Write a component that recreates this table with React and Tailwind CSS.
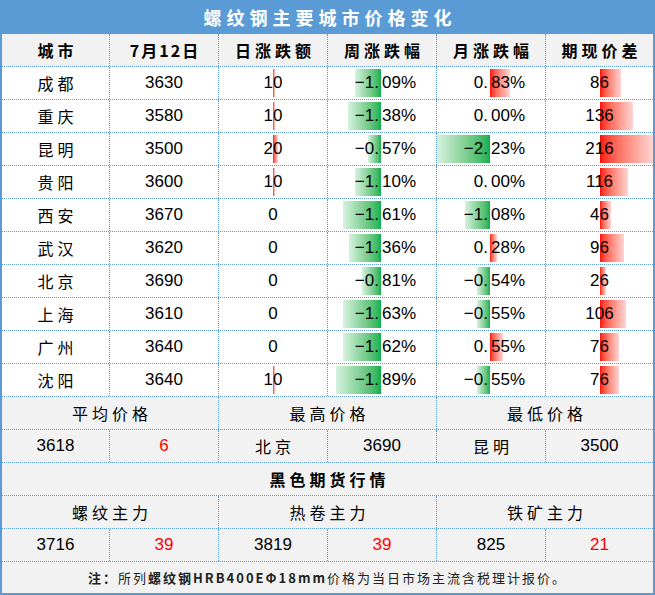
import React from "react";

const ROW =
  "grid h-[33px] grid-cols-[108px_109px_109px_109px_109px_1fr] border-b border-dotted border-[#5b9bd5]";
const CELL =
  "flex h-full items-center justify-center border-r border-dotted border-[#5b9bd5]";
const CELL_LAST = "flex h-full items-center justify-center";
const CJK = "font-['Noto_Sans_CJK_SC',sans-serif] text-[16px] tracking-[4px] pl-[4px] text-black";
const NUM = "font-['Liberation_Sans','Noto_Sans_CJK_SC',sans-serif] text-[17px] text-black";
const NUM_RED = "font-['Liberation_Sans','Noto_Sans_CJK_SC',sans-serif] text-[17px] text-[#ff0000]";

const data = [
  ["成都", 3630, 10, -1.09, 0.83, 86],
  ["重庆", 3580, 10, -1.38, 0.0, 136],
  ["昆明", 3500, 20, -0.57, -2.23, 216],
  ["贵阳", 3600, 10, -1.1, 0.0, 116],
  ["西安", 3670, 0, -1.61, -1.08, 46],
  ["武汉", 3620, 0, -1.36, 0.28, 96],
  ["北京", 3690, 0, -0.81, -0.54, 26],
  ["上海", 3610, 0, -1.63, -0.55, 106],
  ["广州", 3640, 0, -1.62, 0.55, 76],
  ["沈阳", 3640, 10, -1.89, -0.55, 76],
];

function Bar({ v, scale, axis }) {
  if (v === 0) return null;
  const w = Math.abs(v) * scale;
  const neg = v < 0;
  return (
    <div
      className={
        neg
          ? "absolute top-[2px] bottom-[2px] bg-linear-to-r from-[#d6f2e0] to-[#00b050]"
          : "absolute top-[2px] bottom-[2px] bg-linear-to-r from-[#ff0000] to-[#ffd4d4]"
      }
      style={{ left: neg ? axis - w : axis, width: w }}
    />
  );
}

function Pct({ v, last }) {
  const neg = v < 0;
  const [i, f] = Math.abs(v).toFixed(2).split(".");
  return (
    <div className={(last ? CELL_LAST : CELL) + " relative"}>
      <Bar v={v} scale={23.6} axis={53} />
      <div className={"relative flex w-full items-center " + NUM}>
        <span className="w-[53px] pr-[2px] text-right">
          {neg ? "−" : ""}
          {i}.
        </span>
        <span className="pl-[1px]">{f}%</span>
      </div>
    </div>
  );
}

function Plain({ v, last }) {
  return (
    <div className={(last ? CELL_LAST : CELL) + " relative"}>
      <Bar v={v} scale={0.245} axis={54} />
      <span className={"relative " + NUM}>{v}</span>
    </div>
  );
}

export default function App() {
  return (
    <div className="flex h-[595px] w-[655px] flex-col overflow-hidden border-x-2 border-b-2 border-[#5b9bd5] bg-white">
      <div className="flex h-[34px] shrink-0 items-center justify-center bg-[#5b9bd5]">
        <span className="pl-[5px] font-['Noto_Sans_CJK_SC',sans-serif] text-[18px] font-bold tracking-[5px] text-white">
          螺纹钢主要城市价格变化
        </span>
      </div>

      <div className={ROW + " bg-[#f2f2f2]"}>
        {["城市", "7月12日", "日涨跌额", "周涨跌幅", "月涨跌幅", "期现价差"].map((h, k) => (
          <div key={h} className={k === 5 ? CELL_LAST : CELL}>
            <span
              className={
                k === 1
                  ? "pl-[2px] font-['Noto_Sans_CJK_SC',sans-serif] text-[16px] font-bold tracking-[2px] text-black"
                  : "pl-[4px] font-['Noto_Sans_CJK_SC',sans-serif] text-[16px] font-bold tracking-[4px] text-black"
              }
            >
              {h}
            </span>
          </div>
        ))}
      </div>

      {data.map(([city, price, day, week, month, diff]) => (
        <div key={city} className={ROW + " bg-white"}>
          <div className={CELL}>
            <span className={CJK}>{city}</span>
          </div>
          <div className={CELL}>
            <span className={NUM}>{price}</span>
          </div>
          <Plain v={day} />
          <Pct v={week} />
          <Pct v={month} />
          <Plain v={diff} last />
        </div>
      ))}

      <div className={ROW + " bg-[#f2f2f2]"}>
        <div className={CELL + " col-span-2"}>
          <span className={CJK}>平均价格</span>
        </div>
        <div className={CELL + " col-span-2"}>
          <span className={CJK}>最高价格</span>
        </div>
        <div className={CELL_LAST + " col-span-2"}>
          <span className={CJK}>最低价格</span>
        </div>
      </div>

      <div className={ROW + " bg-[#f2f2f2]"}>
        <div className={CELL}>
          <span className={NUM}>3618</span>
        </div>
        <div className={CELL}>
          <span className={NUM_RED}>6</span>
        </div>
        <div className={CELL}>
          <span className={CJK}>北京</span>
        </div>
        <div className={CELL}>
          <span className={NUM}>3690</span>
        </div>
        <div className={CELL}>
          <span className={CJK}>昆明</span>
        </div>
        <div className={CELL_LAST}>
          <span className={NUM}>3500</span>
        </div>
      </div>

      <div className={ROW + " bg-[#f2f2f2]"}>
        <div className={CELL_LAST + " col-span-6"}>
          <span className="pl-[4px] font-['Noto_Sans_CJK_SC',sans-serif] text-[16px] font-bold tracking-[4px] text-black">
            黑色期货行情
          </span>
        </div>
      </div>

      <div className={ROW + " bg-[#f2f2f2]"}>
        <div className={CELL + " col-span-2"}>
          <span className={CJK}>螺纹主力</span>
        </div>
        <div className={CELL + " col-span-2"}>
          <span className={CJK}>热卷主力</span>
        </div>
        <div className={CELL_LAST + " col-span-2"}>
          <span className={CJK}>铁矿主力</span>
        </div>
      </div>

      <div className={ROW + " bg-[#f2f2f2]"}>
        <div className={CELL}>
          <span className={NUM}>3716</span>
        </div>
        <div className={CELL}>
          <span className={NUM_RED}>39</span>
        </div>
        <div className={CELL}>
          <span className={NUM}>3819</span>
        </div>
        <div className={CELL}>
          <span className={NUM_RED}>39</span>
        </div>
        <div className={CELL}>
          <span className={NUM}>825</span>
        </div>
        <div className={CELL_LAST}>
          <span className={NUM_RED}>21</span>
        </div>
      </div>

      <div className="flex flex-1 items-center justify-center bg-[#f2f2f2]">
        <span className="font-['Noto_Sans_CJK_SC',sans-serif] text-[13px] tracking-[2px] text-[#222]">
          <span className="font-bold">注：</span>
          所列
          <span className="font-bold">螺纹钢HRB400EΦ18mm</span>
          价格为当日市场主流含税理计报价。
        </span>
      </div>
    </div>
  );
}
